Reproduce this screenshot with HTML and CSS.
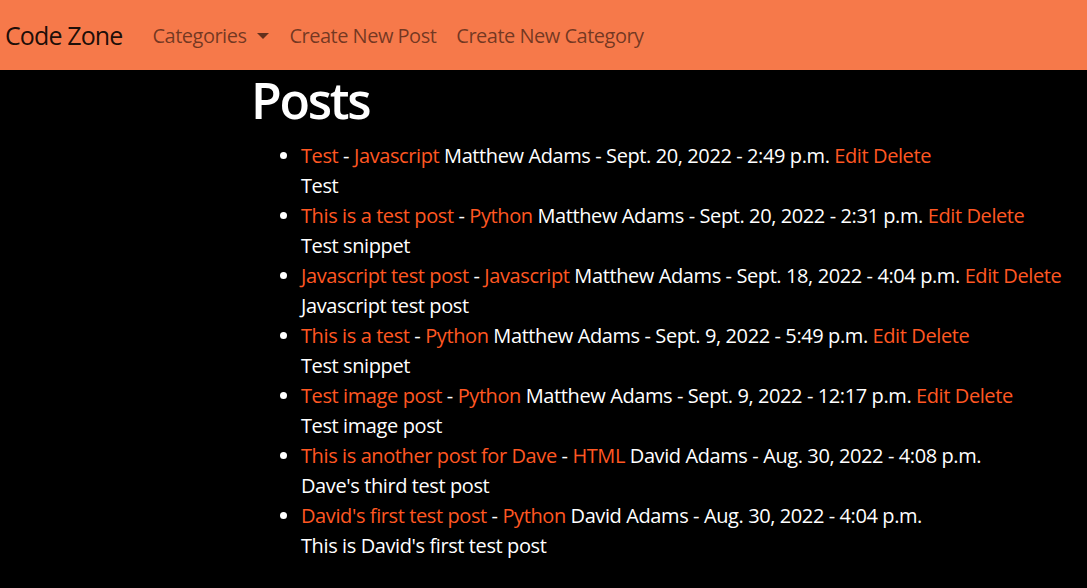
FILE: index.html
```html
<!DOCTYPE html>
<html lang="en">
<head>
<meta charset="utf-8">
<title>Code Zone</title>
<link rel="stylesheet" href="styles.css">
</head>
<body>
<nav class="navbar">
  <a class="brand" href="#">Code Zone</a>
  <ul class="nav">
    <li><a class="nav-link dropdown" href="#">Categories<span class="caret"></span></a></li>
    <li><a class="nav-link" href="#">Create New Post</a></li>
    <li><a class="nav-link" href="#">Create New Category</a></li>
  </ul>
</nav>
<main class="content">
  <h1 class="title">Posts</h1>
  <ul class="posts">
    <li><a href="#">Test</a> - <a href="#">Javascript</a> Matthew Adams - Sept. 20, 2022 - 2:49 p.m. <a href="#">Edit</a> <a href="#">Delete</a><div class="snippet">Test</div></li>
    <li><a href="#">This is a test post</a> - <a href="#">Python</a> Matthew Adams - Sept. 20, 2022 - 2:31 p.m. <a href="#">Edit</a> <a href="#">Delete</a><div class="snippet">Test snippet</div></li>
    <li><a href="#">Javascript test post</a> - <a href="#">Javascript</a> Matthew Adams - Sept. 18, 2022 - 4:04 p.m. <a href="#">Edit</a> <a href="#">Delete</a><div class="snippet">Javascript test post</div></li>
    <li><a href="#">This is a test</a> - <a href="#">Python</a> Matthew Adams - Sept. 9, 2022 - 5:49 p.m. <a href="#">Edit</a> <a href="#">Delete</a><div class="snippet">Test snippet</div></li>
    <li><a href="#">Test image post</a> - <a href="#">Python</a> Matthew Adams - Sept. 9, 2022 - 12:17 p.m. <a href="#">Edit</a> <a href="#">Delete</a><div class="snippet">Test image post</div></li>
    <li><a href="#">This is another post for Dave</a> - <a href="#">HTML</a> David Adams - Aug. 30, 2022 - 4:08 p.m.<div class="snippet">Dave's third test post</div></li>
    <li><a href="#">David's first test post</a> - <a href="#">Python</a> David Adams - Aug. 30, 2022 - 4:04 p.m.<div class="snippet">This is David's first test post</div></li>
  </ul>
</main>
</body>
</html>
```
FILE: styles.css
```css
* { box-sizing: border-box; }
html, body {
  margin: 0;
  background: #000;
  color: #fff;
  font-family: "Open Sans", "Noto Sans", sans-serif;
  font-size: 20px;
  line-height: 1.5;
  letter-spacing: -0.02em;
}
a { text-decoration: none; }

.navbar {
  display: flex;
  align-items: center;
  height: 70px;
  padding: 2px 5px 0 5px;
  background: #f6794a;
}
.brand {
  font-size: 25px;
  line-height: 37.5px;
  letter-spacing: -0.035em;
  color: rgba(0, 0, 0, 0.9);
  margin-right: 20px;
  padding: 6px 0;
}
.nav {
  display: flex;
  list-style: none;
  margin: 0;
  padding: 0;
}
.nav-link {
  display: flex;
  align-items: center;
  padding: 10px 10px;
  letter-spacing: -0.025em;
  color: rgba(0, 0, 0, 0.55);
}
.caret {
  display: inline-block;
  margin-left: 11px;
  width: 0;
  height: 0;
  border-top: 6px solid rgba(0, 0, 0, 0.6);
  border-left: 6px solid transparent;
  border-right: 6px solid transparent;
}

.content {
  padding-left: 251px;
}
.title {
  margin: 0 0 10px;
  font-size: 50px;
  font-weight: 600;
  line-height: 60px;
  letter-spacing: -0.045em;
}
.posts {
  margin: 0;
  padding: 1px 0 0 50px;
}
.posts a { color: #ff5722; }
.snippet { color: #fff; }
```
